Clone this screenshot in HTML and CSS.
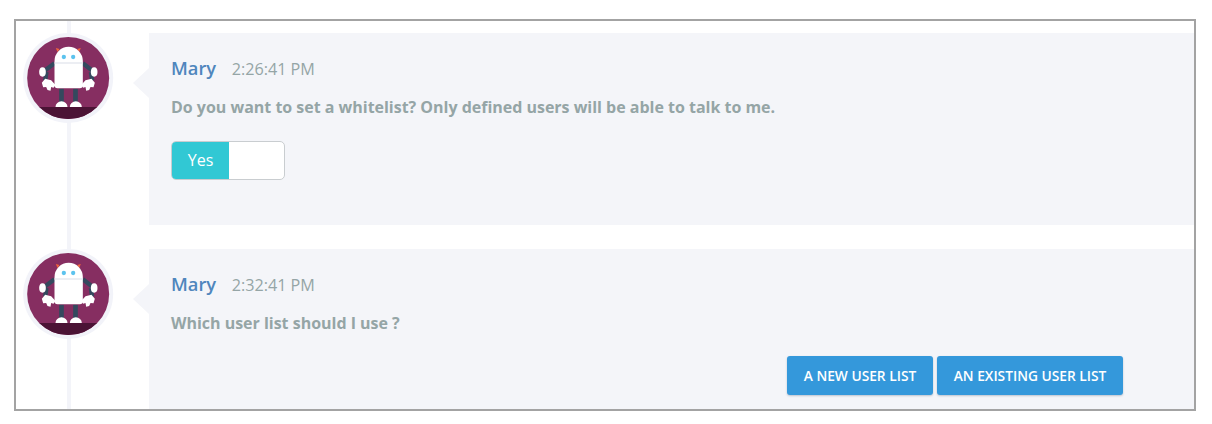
FILE: index.html
```html
<!DOCTYPE html>
<html lang="en">
<head>
<meta charset="utf-8">
<title>Mary</title>
<link rel="stylesheet" href="styles.css">
</head>
<body>
<svg class="defs" width="0" height="0" aria-hidden="true">
  <symbol id="robot" viewBox="40 55 272 270">
    <defs><clipPath id="disc"><circle cx="175" cy="190" r="123"/></clipPath></defs>
    <circle cx="175" cy="190" r="135" fill="#f2f3f9"/>
    <circle cx="175" cy="190" r="123" fill="#862e61"/>
    <rect x="40" y="277" width="272" height="50" fill="#4b1335" clip-path="url(#disc)"/>
    <path d="M138 100l11 3-6 9zM213 100l-11 3 6 9z" fill="#f0643c"/>
    <path d="M134 146L104 168M219 146L248 168M110 172L106 198M243 172L247 198" stroke="#34495e" stroke-width="13" fill="none"/>
    <path d="M155 222V264M197 222V264" stroke="#34495e" stroke-width="14" fill="none"/>
    <path d="M134 139a42 42 0 0 1 85 0v73a9 9 0 0 1-9 9h-67a9 9 0 0 1-9-9z" fill="#fff"/>
    <rect x="134" y="143" width="85" height="4" fill="#e3e6ee"/>
    <circle cx="162" cy="127" r="6.5" fill="#5cc3ee"/>
    <circle cx="190" cy="127" r="6.5" fill="#5cc3ee"/>
    <ellipse cx="98" cy="172" rx="10" ry="14" fill="#fff"/>
    <ellipse cx="253" cy="172" rx="10" ry="14" fill="#fff"/>
    <path d="M106 192l18 5 13 14-6 8-7-2-2 11-9-2-4-9-9 1-4-14z" fill="#fff"/>
    <path d="M245 192l-18 5-13 14 6 8 7-2 2 11 9-2 4-9 9 1 4-14z" fill="#fff"/>
    <path d="M137 277a18 17 0 0 1 36 0zM180 277a18 17 0 0 1 36 0z" fill="#fff"/>
  </symbol>
</svg>

<main class="frame">
  <article class="row">
    <svg class="avatar" aria-hidden="true"><use href="#robot"/></svg>
    <section class="panel panel-first">
      <header class="meta"><span class="name">Mary</span><time class="time">2:26:41 PM</time></header>
      <p class="message">Do you want to set a whitelist? Only defined users will be able to talk to me.</p>
      <div class="toggle"><span class="toggle-on">Yes</span><span class="toggle-off"></span></div>
    </section>
  </article>
  <article class="row">
    <svg class="avatar" aria-hidden="true"><use href="#robot"/></svg>
    <section class="panel panel-second">
      <header class="meta"><span class="name">Mary</span><time class="time">2:32:41 PM</time></header>
      <p class="message">Which user list should I use ?</p>
      <div class="actions">
        <button class="action action-new" type="button">A new user list</button>
        <button class="action action-existing" type="button">An existing user list</button>
      </div>
    </section>
  </article>
</main>
</body>
</html>
```

FILE: styles.css
```css
* { box-sizing: border-box; }
html, body { margin: 0; padding: 0; background: #fff; }
body { padding: 19px 16px 0 14px; font-family: "Open Sans", "Liberation Sans", sans-serif; }
.defs { position: absolute; }

.frame {
  position: relative;
  height: 392px;
  border: 2px solid #a3a3a3;
  padding-top: 12px;
  overflow: hidden;
  display: flex;
  flex-direction: column;
  gap: 24px;
  background: #fff;
}
.frame::before {
  content: "";
  position: absolute;
  left: 51px;
  top: 0;
  bottom: 0;
  width: 4px;
  background: #f3f4f9;
}

.row { position: relative; display: flex; align-items: flex-start; padding-left: 7px; gap: 35px; }
.avatar { flex: none; width: 91px; height: 90px; }

.panel {
  position: relative;
  flex: 1;
  background: #f4f5f9;
  padding: 20px 0 0 22px;
}
.panel::before {
  content: "";
  position: absolute;
  left: -16px;
  top: 35px;
  width: 16px;
  height: 30px;
  background: #f4f5f9;
  clip-path: polygon(100% 0, 0 50%, 100% 100%);
}
.panel-first { height: 192px; }
.panel-second { height: 180px; }

.meta { display: flex; align-items: baseline; gap: 15.5px; height: 30px; }
.name { font-size: 18.3px; line-height: 30px; font-weight: 600; color: #4f86bd; }
.time { font-size: 16.2px; line-height: 30px; color: #95a5a6; }

.message {
  margin: 12px 0 0;
  font-size: 16px;
  line-height: 24px;
  font-weight: 700;
  letter-spacing: -0.015px;
  color: #95a5a6;
}

.toggle {
  display: flex;
  width: 114px;
  height: 39px;
  margin-top: 22px;
  border: 1px solid #c9cdd0;
  border-radius: 5px;
  background: #fff;
  overflow: hidden;
}
.toggle-on {
  width: 57px;
  background: #31c8d4;
  color: #fff;
  font-size: 16px;
  line-height: 37px;
  text-align: center;
}
.toggle-off { flex: 1; }

.actions { display: flex; justify-content: flex-end; gap: 4px; margin-top: 21px; padding-right: 71px; }
.action {
  height: 39px;
  padding: 1px 0 0;
  border: 0;
  border-radius: 3px;
  background: #3498db;
  box-shadow: 0 1px 2px rgba(60, 80, 110, 0.3);
  color: #fff;
  font: 600 13.75px/38px "Open Sans", "Liberation Sans", sans-serif;
  text-transform: uppercase;
}
.action-new { width: 146px; }
.action-existing { width: 186px; }
```
